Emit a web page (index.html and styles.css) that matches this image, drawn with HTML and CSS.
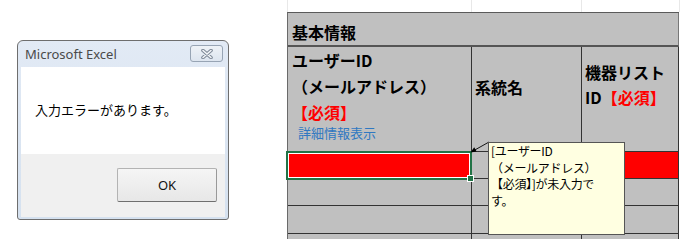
FILE: index.html
```html
<html><head>
  <title>入力エラー</title>
  <meta charset="utf-8">
  <link rel="stylesheet" href="styles.css">
</head>
<body>

<div class="dialog">
  <div class="titlebar">
    <span class="title">Microsoft Excel</span>
    <span class="close">
      <svg width="12" height="10" viewBox="0 0 12 10">
        <path d="M2 1.5 L10 8.5 M10 1.5 L2 8.5" stroke="#7d8896" stroke-width="3.6" stroke-linecap="round"/>
        <path d="M2 1.5 L10 8.5 M10 1.5 L2 8.5" stroke="#f4f6f9" stroke-width="1.6" stroke-linecap="round"/>
      </svg>
    </span>
  </div>
  <div class="client">
    <div class="message">入力エラーがあります。</div>
    <div class="footer">
      <button class="ok">OK</button>
    </div>
  </div>
</div>

<div class="sheet">
  <div class="gridlines">
    <div></div><div></div><div></div>
  </div>
  <div class="grid">
    <div class="cell head">基本情報</div>

    <div class="cell col1">
      <div class="bold">ユーザーID</div>
      <div class="bold">（メールアドレス）</div>
      <div class="bold req">【必須】</div>
      <div class="detail">詳細情報表示</div>
    </div>
    <div class="cell col2"><div class="bold">系統名</div></div>
    <div class="cell col3">
      <div class="bold">機器リスト</div>
      <div class="bold">ID<span class="req">【必須】</span></div>
    </div>

    <div class="cell red"></div>
    <div class="cell"></div>
    <div class="cell red"></div>

    <div class="cell"></div>
    <div class="cell"></div>
    <div class="cell"></div>

    <div class="cell"></div>
    <div class="cell"></div>
    <div class="cell"></div>

    <div class="cell last"></div>
    <div class="cell last"></div>
    <div class="cell last"></div>
  </div>

  <!-- selection, comment and its arrow lie over the grid -->
  <div class="selection"></div>
  <div class="handle"></div>
  <svg class="arrow" width="392" height="240" viewBox="0 0 392 240">
    <line x1="186" y1="151" x2="202" y2="142" stroke="#000" stroke-width="0.9"/>
    <polygon points="183.5,152.5 189.6,151.6 187.2,147.2" fill="#000"/>
  </svg>
  <div class="comment">[ユーザーID<br>（メールアドレス）<br>【必須】]が未入力で<br>す。</div>
</div>

</body></html>
```

FILE: styles.css
```css
body {
  margin: 0;
  display: flex;
  align-items: flex-start;
  background: #fff;
  font-family: "Noto Sans CJK JP", "Noto Sans", sans-serif;
  color: #000;
}

/* ---- message box ---- */
.dialog {
  margin: 40px 0 0 17px;
  width: 212px;
  height: 180px;
  box-sizing: border-box;
  border: 1px solid #6e6e6e;
  border-radius: 6px 6px 3px 3px;
  background: linear-gradient(#e2eaf5, #d5e1ef);
  padding: 0 3px 2px 3px;
  display: flex;
  flex-direction: column;
}

.titlebar {
  height: 26px;
  display: flex;
  justify-content: space-between;
  align-items: flex-start;
}

.title {
  font-family: "Noto Sans", "Liberation Sans", sans-serif;
  font-size: 13px;
  line-height: 26px;
  color: #4a4a4a;
  padding-left: 4px;
}

.close {
  margin: 4px 2px 0 0;
  width: 33px;
  height: 17px;
  box-sizing: border-box;
  border: 1px solid #97a4b4;
  border-radius: 3px;
  background: linear-gradient(#eef2f7, #dde5ef);
  display: flex;
  justify-content: center;
  align-items: center;
}

.client {
  flex: 1;
  display: flex;
  flex-direction: column;
}

.message {
  height: 87px;
  box-sizing: border-box;
  background: #fff;
  padding: 33px 0 0 14px;
  font-size: 13px;
  line-height: 20px;
}

.footer {
  flex: 1;
  background: #f0f0f0;
  display: flex;
  justify-content: flex-end;
  align-items: flex-start;
  padding: 14px 8px 0 0;
}

.ok {
  width: 100px;
  height: 34px;
  border: 1px solid #b3b3b3;
  border-right-color: #999;
  border-bottom-color: #6f6f6f;
  border-radius: 2px;
  background: linear-gradient(#f5f5f5, #e7e7e7);
  font-family: "Noto Sans", "Liberation Sans", sans-serif;
  font-size: 13px;
  color: #111;
  padding: 0;
}

/* ---- spreadsheet ---- */
.sheet {
  margin-left: 58px;
  width: 392px;
  position: relative;
}

.gridlines {
  height: 12px;
  display: grid;
  grid-template-columns: 184px 110px 98px;
  box-sizing: border-box;
  border-left: 1px solid #e8e8e8;
}

.gridlines div {
  border-right: 1px solid #e8e8e8;
}

.grid {
  display: grid;
  grid-template-columns: 184px 110px 97px;
  grid-template-rows: 34px 105px 27px 27px 28px 5px;
  border-left: 1px solid #6a6a6a;
  border-top: 1px solid #5a5a5a;
  background: #c0c0c0;
}

.cell {
  box-sizing: border-box;
  border-right: 1px solid #333;
  border-bottom: 1px solid #333;
}

.cell.head {
  grid-column: 1 / -1;
  border-bottom: 2px solid #555;
  border-right: 1px solid #777;
  font-weight: bold;
  font-size: 16px;
  line-height: 20px;
  padding: 9px 0 0 4px;
}

.cell.last {
  border-bottom: none;
}

.cell.red {
  background: #ff0000;
}

.bold {
  font-weight: bold;
  font-size: 16px;
}

.req {
  color: #ff0000;
}

.col1 {
  padding: 0 0 0 4px;
  line-height: 26px;
}

.col1 .detail {
  font-size: 13px;
  line-height: 18px;
  color: #2f78c2;
  margin: -1px 0 0 6px;
}

.col2 {
  padding: 27px 0 0 3px;
  line-height: 26px;
}

.col3 {
  padding: 13px 0 0 3px;
  line-height: 25px;
}

.selection {
  position: absolute;
  left: -1px;
  top: 151px;
  width: 186px;
  height: 29px;
  box-sizing: border-box;
  border: 2px solid #217346;
  box-shadow: inset 0 0 0 1px #fff;
}

.handle {
  position: absolute;
  left: 180px;
  top: 175px;
  width: 7px;
  height: 7px;
  box-sizing: border-box;
  background: #217346;
  border: 1px solid #fff;
}

.arrow {
  position: absolute;
  left: 0;
  top: 0;
}

.comment {
  position: absolute;
  left: 201px;
  top: 142px;
  width: 137px;
  height: 93px;
  box-sizing: border-box;
  border: 1px solid #555;
  background: #ffffe1;
  padding: 0 2px;
  font-size: 12px;
  line-height: 16.5px;
  letter-spacing: -0.3px;
}
```
